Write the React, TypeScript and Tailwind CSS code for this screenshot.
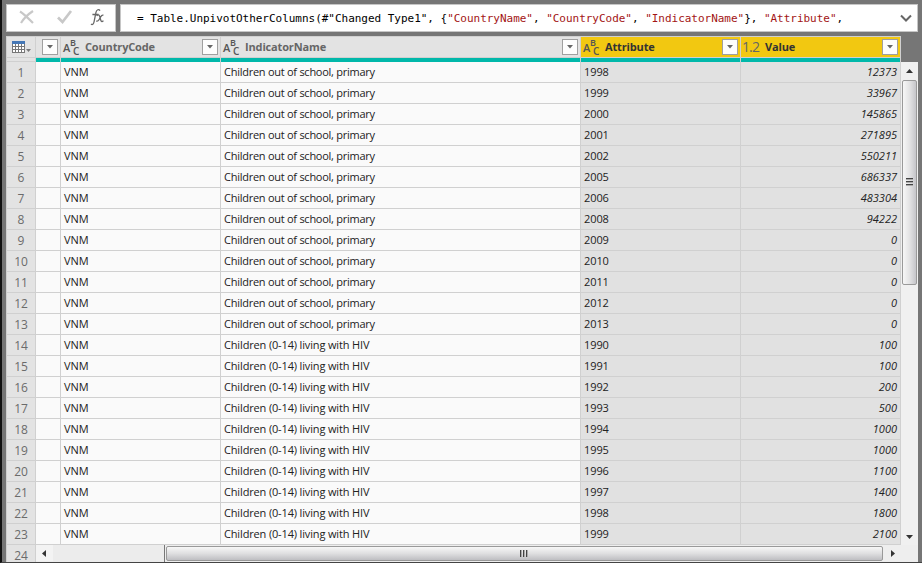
import React from "react";

const school = "Children out of school, primary";
const hiv = "Children (0-14) living with HIV";

const rows: [string, string, string][] = [
  [school, "1998", "12373"],
  [school, "1999", "33967"],
  [school, "2000", "145865"],
  [school, "2001", "271895"],
  [school, "2002", "550211"],
  [school, "2005", "686337"],
  [school, "2006", "483304"],
  [school, "2008", "94222"],
  [school, "2009", "0"],
  [school, "2010", "0"],
  [school, "2011", "0"],
  [school, "2012", "0"],
  [school, "2013", "0"],
  [hiv, "1990", "100"],
  [hiv, "1991", "100"],
  [hiv, "1992", "200"],
  [hiv, "1993", "500"],
  [hiv, "1994", "1000"],
  [hiv, "1995", "1000"],
  [hiv, "1996", "1100"],
  [hiv, "1997", "1400"],
  [hiv, "1998", "1800"],
  [hiv, "1999", "2100"],
];

function FilterButton() {
  return (
    <button className="flex h-4 w-4 shrink-0 items-center justify-center border border-[#a0a0a0] bg-[#fdfdfd]">
      <svg width="6" height="4" viewBox="0 0 6 4" className="-mt-px">
        <path d="M0 0h6L3 3.5z" fill="#666" />
      </svg>
    </button>
  );
}

function TextTypeIcon() {
  return (
    <span className="flex h-[18px] w-[17px] shrink-0 items-start font-['Open_Sans',sans-serif] font-semibold text-[#555]">
      <span className="mt-[5px] w-[7px] text-[11px] leading-[10px]">A</span>
      <span className="flex w-[10px] flex-col">
        <span className="mt-px text-[9px] leading-[8px]">B</span>
        <span className="pl-[3px] text-[10px] leading-[9px]">C</span>
      </span>
    </span>
  );
}

function HeaderCell({ name, width, kind, selected }: { name: string; width: string; kind: "text" | "number"; selected?: boolean }) {
  return (
    <div className={`flex h-[25px] ${width} shrink-0 flex-col border-r border-[#d0d0d0]`}>
      <div className={`flex h-5 items-center pl-[2px] pr-[2px] ${selected ? "bg-[#f2c811] text-[#333]" : "bg-[#e3e3e3] text-[#666]"}`}>
        {kind === "text" ? <TextTypeIcon /> : <span className="-ml-px w-[18px] text-[14px] leading-4 tracking-[-0.9px] text-[#666]">1.2</span>}
        <span className="ml-[5px] flex-1 text-[11px] font-bold tracking-[-0.15px]">{name}</span>
        <FilterButton />
      </div>
      <div className="h-px bg-[#d0d0d0]" />
      <div className="h-1 bg-[#01b8aa]" />
    </div>
  );
}

function TableIcon() {
  return (
    <svg width="20" height="14" viewBox="0 0 20 14" shapeRendering="crispEdges">
      <path d="M0 0h13v12H0z" fill="#777" />
      <path d="M0 0h13v3H0z" fill="#4577b5" />
      <path d="M1 3h2v2H1zM4 3h2v2H4zM7 3h2v2H7zM10 3h2v2h-2zM1 6h2v2H1zM4 6h2v2H4zM7 6h2v2H7zM10 6h2v2h-2zM1 9h2v2H1zM4 9h2v2H4zM7 9h2v2H7zM10 9h2v2h-2z" fill="#fff" />
      <path d="M14 8h5l-2.5 3z" fill="#777" shapeRendering="auto" />
    </svg>
  );
}

function FormulaBar() {
  return (
    <div className="flex h-7 gap-1 pr-1">
      <div className="flex w-[110px] items-center border border-[#c6c6c6] bg-white">
        <svg width="108" height="26" viewBox="0 0 108 26" fill="none">
          <path d="M13 6.5C17 9 21 13 26 18M26 6C20 10 17 13 14 18" stroke="#c8c8c8" strokeWidth="2.2" />
          <path d="M51 12.5l4.5 4.5L64 6" stroke="#c8c8c8" strokeWidth="2.7" />
          <path d="M93 5.6c-1.1-1.8-3.5-1.1-4.1 2l-1.8 9c-.5 2.6-1.8 3.6-3.1 2.5M85.4 9.5h6.2M89.7 10.9c1.2-1.6 2.4-1.4 2.9.2l1.2 4.2c.5 1.7 1.5 1.7 2.6.3M96.5 10.3c-1.2-.7-2 .1-3 1.8l-1.5 2.6c-.9 1.5-1.7 1.8-2.7 1.2" stroke="#686868" strokeWidth="1.3" />
        </svg>
      </div>
      <div className="flex flex-1 items-center border border-[#c6c6c6] bg-white pl-4 pr-[5px]">
        <code className="flex-1 whitespace-pre pt-[2px] font-['DejaVu_Sans_Mono',monospace] text-[11px] tracking-[-0.024px] text-black">
          {'= Table.UnpivotOtherColumns(#"Changed Type1", {'}
          <span className="text-[#a31515]">"CountryName"</span>, <span className="text-[#a31515]">"CountryCode"</span>, <span className="text-[#a31515]">"IndicatorName"</span>
          {"}, "}
          <span className="text-[#a31515]">"Attribute"</span>,
        </code>
        <svg width="12" height="8" viewBox="0 0 12 8" fill="none">
          <path d="M1 1.5l5 5 5-5" stroke="#666" strokeWidth="2" />
        </svg>
      </div>
    </div>
  );
}

function VerticalScrollbar() {
  return (
    <div className="flex h-[483px] w-[17px] flex-col items-center bg-[#f0f0f0]">
      <div className="flex h-[18px] items-center">
        <svg width="7" height="4" viewBox="0 0 7 4"><path d="M0 4h7L3.5 0z" fill="#333" /></svg>
      </div>
      <div className="flex h-[205px] w-[15px] items-center justify-center rounded-[2px] border border-[#999] bg-linear-to-r from-[#f7f7f7] via-[#e3e3e4] to-[#c5c5c9]">
        <div className="-mt-px flex w-[7px] flex-col gap-px">
          <div className="h-[2px] border-b border-[#aaa] bg-[#444]" />
          <div className="h-[2px] border-b border-[#aaa] bg-[#444]" />
          <div className="h-[2px] border-b border-[#aaa] bg-[#444]" />
        </div>
      </div>
      <div className="flex-1" />
      <div className="flex h-[17px] items-center">
        <svg width="7" height="4" viewBox="0 0 7 4"><path d="M0 0h7L3.5 4z" fill="#333" /></svg>
      </div>
    </div>
  );
}

function HorizontalScrollbar() {
  return (
    <div className="flex h-[17px] items-start bg-[#eee]">
      <div className="flex h-4 w-[17px] items-center justify-center bg-[#f3f3f3] pr-[2px]">
        <svg width="4" height="7" viewBox="0 0 4 7"><path d="M4 0v7L0 3.5z" fill="#333" /></svg>
      </div>
      <div className="h-[17px] w-[112px] border-r border-[#777] bg-[#ececec]" />
      <div className="ml-[1px] mt-px flex h-[15px] w-[717px] items-center justify-center rounded-[2px] border border-[#999] bg-linear-to-b from-[#f7f7f7] via-[#dfdfe0] to-[#bebec2] pr-[2px]">
        <div className="flex h-[7px] gap-px">
          <div className="w-[2px] border-r border-[#aaa] bg-[#444]" />
          <div className="w-[2px] border-r border-[#aaa] bg-[#444]" />
          <div className="w-[2px] border-r border-[#aaa] bg-[#444]" />
        </div>
      </div>
      <div className="flex h-4 w-[19px] items-center justify-center">
        <svg width="4" height="7" viewBox="0 0 4 7"><path d="M0 0v7l4-3.5z" fill="#333" /></svg>
      </div>
    </div>
  );
}

export default function App() {
  return (
    <div className="h-[563px] w-[922px] overflow-hidden border-b border-l-2 border-b-[#444] border-l-[#111] bg-[#767676] pl-1 pt-1 font-['Open_Sans','Noto_Sans',sans-serif] text-[11px] text-[#222]">
      <FormulaBar />
      <div className="mt-1 flex">
        <div className="w-[30px] border-l border-[#d0d0d0] bg-[#e3e3e3]">
          <div className="flex h-[22px] items-center border-b border-r border-t border-[#d0d0d0] pl-[5px] pt-[2px]">
            <TableIcon />
          </div>
          <div className="h-1 border-b border-r border-[#d0d0d0]" />
          {rows.map((_, i) => (
            <div key={i} className="flex h-[21px] items-center justify-center border-b border-r border-[#d0d0d0] pt-px text-xs text-[#6b6b6b]">{i + 1}</div>
          ))}
          <div className="flex h-[21px] items-center justify-center border-r border-[#d0d0d0] text-xs text-[#6b6b6b]">24</div>
        </div>
        <div>
          <div className="flex h-[26px] w-[865px] border-t border-[#d0d0d0]">
            <div className="flex h-[25px] w-[25px] shrink-0 flex-col border-r border-[#d0d0d0]">
              <div className="flex h-5 items-center justify-end bg-[#e3e3e3] pr-[2px]"><FilterButton /></div>
              <div className="h-px bg-[#d0d0d0]" />
              <div className="h-1 bg-[#01b8aa]" />
            </div>
            <HeaderCell name="CountryCode" width="w-[160px]" kind="text" />
            <HeaderCell name="IndicatorName" width="w-[360px]" kind="text" />
            <HeaderCell name="Attribute" width="w-[160px]" kind="text" selected />
            <HeaderCell name="Value" width="w-[160px]" kind="number" selected />
          </div>
          <div className="flex">
            <div className="w-[865px]">
              {rows.map(([indicator, year, value], i) => (
                <div key={i} className="flex h-[21px] *:flex *:shrink-0 *:items-center *:border-b *:border-r *:border-[#d0d0d0]">
                  <div className="w-[25px] bg-[#fafafa]" />
                  <div className="w-[160px] bg-[#fafafa] pl-[3px]">VNM</div>
                  <div className={`w-[360px] bg-[#fafafa] pl-[3px] ${indicator === school ? "tracking-[-0.26px]" : "tracking-[-0.15px]"}`}>{indicator}</div>
                  <div className="w-[160px] bg-[#e1e1e1] pl-[3px] tracking-[-0.1px]">{year}</div>
                  <div className="w-[160px] justify-end bg-[#e1e1e1] pr-[3px] italic">{value}</div>
                </div>
              ))}
            </div>
            <VerticalScrollbar />
          </div>
          <HorizontalScrollbar />
        </div>
      </div>
    </div>
  );
}
